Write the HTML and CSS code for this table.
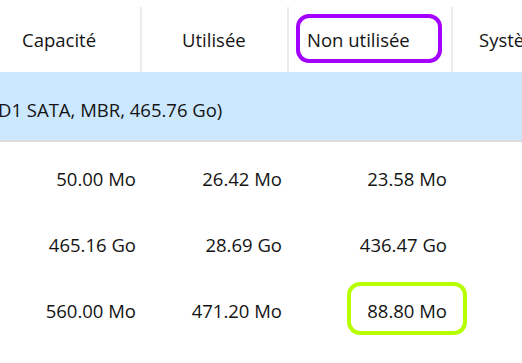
FILE: index.html
```html
<!DOCTYPE html>
<html lang="fr">
<head>
<meta charset="utf-8">
<link rel="stylesheet" href="styles.css">
</head>
<body>
<div class="table">
  <div class="header">
    <div class="hcell c1"><span class="label l1">Capacité</span></div>
    <div class="hcell c2"><span class="label l2">Utilisée</span></div>
    <div class="hcell c3"><span class="label l3">Non utilisée</span><span class="mark mark-purple"></span></div>
    <div class="hcell c4 last"><span class="label l4">Systè</span></div>
  </div>
  <div class="band"><span class="band-text">D1 SATA, MBR, 465.76 Go)</span></div>
  <div class="rows">
    <div class="row">
      <div class="cell c1">50.00 Mo</div>
      <div class="cell c2">26.42 Mo</div>
      <div class="cell c3">23.58 Mo</div>
      <div class="cell c4"></div>
    </div>
    <div class="row">
      <div class="cell c1">465.16 Go</div>
      <div class="cell c2">28.69 Go</div>
      <div class="cell c3">436.47 Go</div>
      <div class="cell c4"></div>
    </div>
    <div class="row">
      <div class="cell c1">560.00 Mo</div>
      <div class="cell c2">471.20 Mo</div>
      <div class="cell c3 highlighted">88.80 Mo<span class="mark mark-green"></span></div>
      <div class="cell c4"></div>
    </div>
  </div>
</div>
</body>
</html>
```

FILE: styles.css
```css
html, body {
  margin: 0;
  padding: 0;
  background: #ffffff;
}

body {
  width: 522px;
  height: 363px;
  overflow: hidden;
  font-family: "Open Sans", "Noto Sans", "Liberation Sans", sans-serif;
  font-size: 18.5px;
  color: #141414;
}

.table {
  display: flex;
  flex-direction: column;
}

.header {
  display: flex;
  height: 72px;
  padding-top: 7px;
  box-sizing: border-box;
  background: #ffffff;
}

.hcell {
  position: relative;
  display: flex;
  align-items: center;
  border-right: 2px solid #ececec;
  box-sizing: border-box;
  white-space: nowrap;
  overflow: visible;
}

.hcell.last {
  border-right: none;
  flex: 1;
}

.c1 { width: 142px; flex: none; }
.c2 { width: 147px; flex: none; }
.c3 { width: 164px; flex: none; }
.c4 { flex: 1; }

.label { line-height: 24px; margin-top: 1px; }
.l1 { padding-left: 22px; }
.l2 { padding-left: 40px; }
.l3 { padding-left: 18px; }
.l4 { padding-left: 26px; }

.band {
  display: flex;
  align-items: center;
  height: 68px;
  background: #cce8ff;
  border-bottom: 2px solid #dcdcdc;
  box-sizing: content-box;
  white-space: nowrap;
}

.band-text {
  margin-left: -2px;
  margin-top: 8px;
  line-height: 24px;
}

.rows {
  padding-top: 4px;
  display: flex;
  flex-direction: column;
}

.row {
  display: flex;
  height: 66px;
  align-items: center;
}

.cell {
  position: relative;
  text-align: right;
  box-sizing: border-box;
  white-space: nowrap;
  line-height: 24px;
}

.row .c1 { padding-right: 6px; }
.row .c2 { padding-right: 7px; }
.row .c3 { padding-right: 6px; }

.mark {
  position: absolute;
  box-sizing: border-box;
  border-radius: 13px;
  pointer-events: none;
}

.mark-purple {
  left: 7px;
  top: 7px;
  width: 146px;
  height: 49px;
  border: 4px solid #a400ff;
}

.mark-green {
  left: 58px;
  top: -17px;
  width: 120px;
  height: 53px;
  border: 4px solid #b6ff00;
}
```
